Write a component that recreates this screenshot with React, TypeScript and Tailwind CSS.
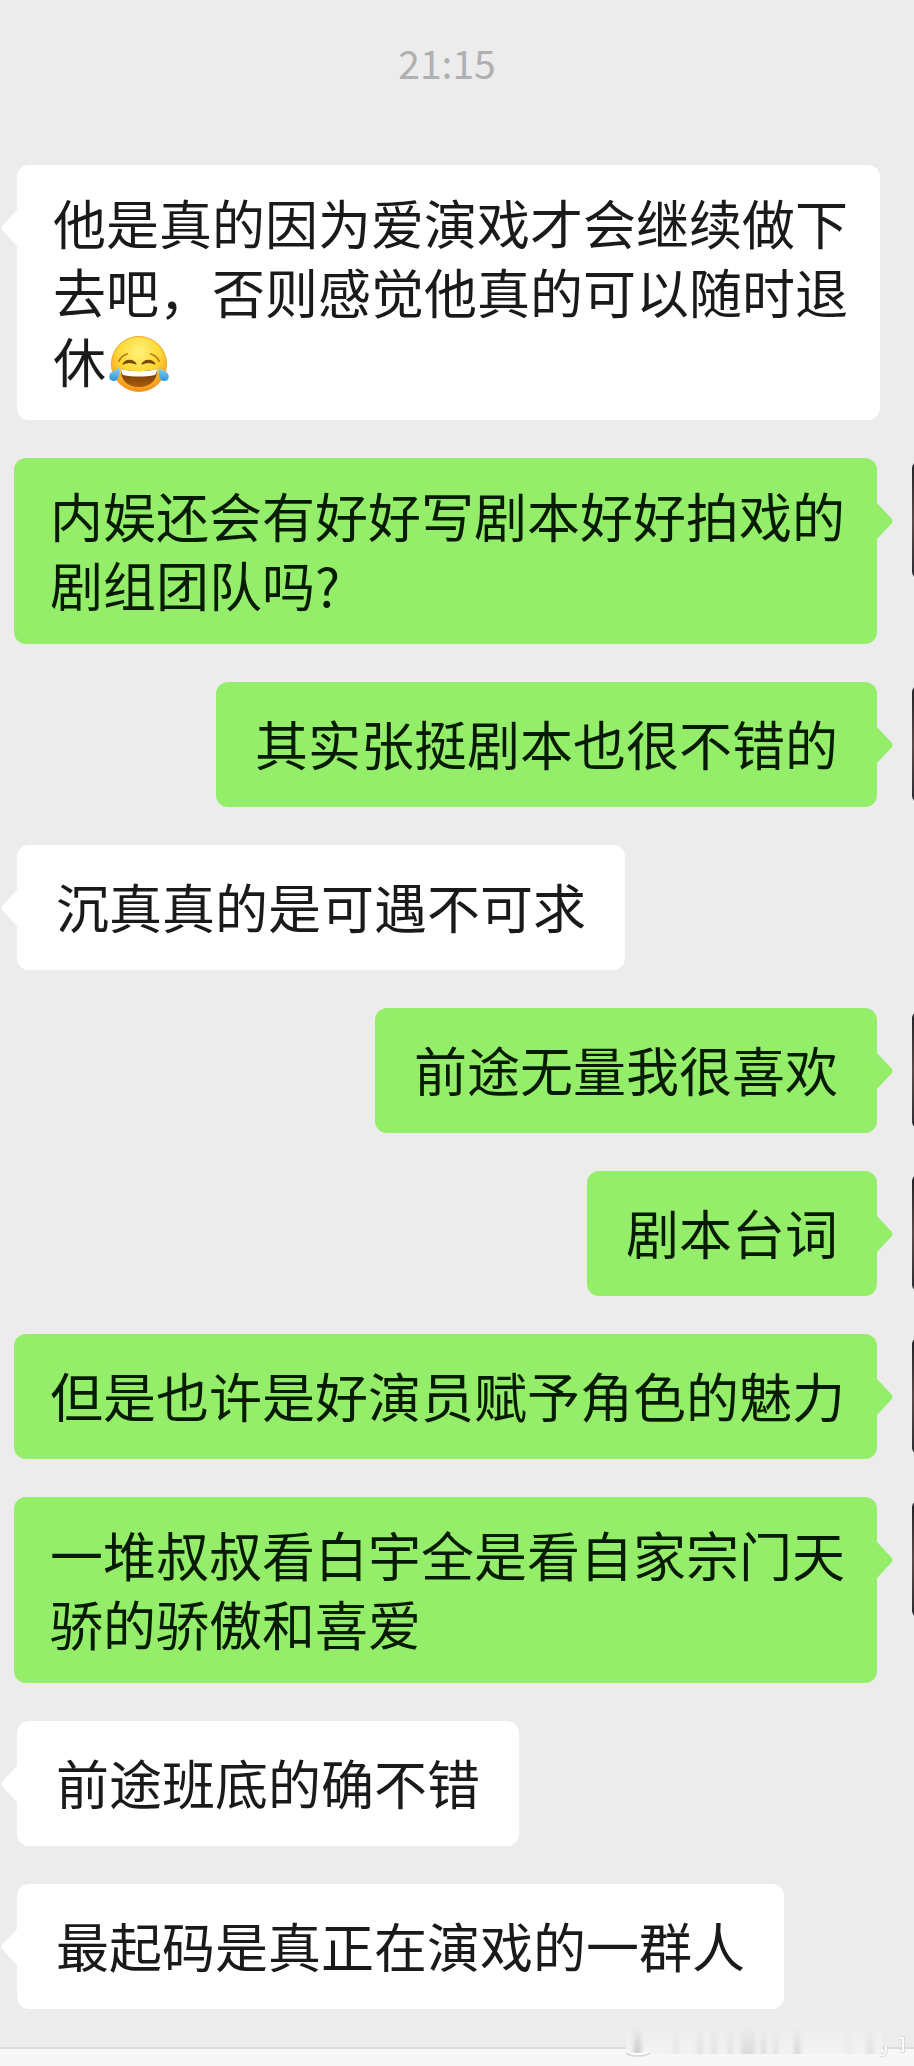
type Message = {
  text: string;
  sent?: boolean;
  wide?: boolean;
  emoji?: boolean;
};

const messages: Message[] = [
  {
    text: "他是真的因为爱演戏才会继续做下去吧，否则感觉他真的可以随时退休",
    wide: true,
    emoji: true,
  },
  { text: "内娱还会有好好写剧本好好拍戏的剧组团队吗?", sent: true, wide: true },
  { text: "其实张挺剧本也很不错的", sent: true },
  { text: "沉真真的是可遇不可求" },
  { text: "前途无量我很喜欢", sent: true },
  { text: "剧本台词", sent: true },
  { text: "但是也许是好演员赋予角色的魅力", sent: true, wide: true },
  {
    text: "一堆叔叔看白宇全是看自家宗门天骄的骄傲和喜爱",
    sent: true,
    wide: true,
  },
  { text: "前途班底的确不错" },
  { text: "最起码是真正在演戏的一群人" },
];

const JoyEmoji = () => (
  <svg
    className="inline-block w-[60px] h-[60px] ml-[3px] -mt-3 -mb-1 align-middle"
    viewBox="0 0 60 60"
    role="img"
    aria-label="笑哭"
  >
    <defs>
      <radialGradient id="face" cx="50%" cy="28%" r="75%">
        <stop offset="0" stopColor="#fff27a" />
        <stop offset="0.5" stopColor="#fdd835" />
        <stop offset="0.82" stopColor="#f9a825" />
        <stop offset="1" stopColor="#ef8412" />
      </radialGradient>
      <linearGradient id="tear" x1="0" y1="0" x2="0" y2="1">
        <stop offset="0" stopColor="#8fd8fb" />
        <stop offset="1" stopColor="#2a93dc" />
      </linearGradient>
      <linearGradient id="mouth" x1="0" y1="0" x2="0" y2="1">
        <stop offset="0" stopColor="#6b3606" />
        <stop offset="1" stopColor="#a85a0c" />
      </linearGradient>
    </defs>
    <circle cx="30" cy="29" r="27.5" fill="url(#face)" stroke="#eda32a" />
    <path
      d="M10 26c2-4 5-6 8-7M50 26c-2-4-5-6-8-7"
      fill="none"
      stroke="#b87814"
      strokeWidth="1.8"
      strokeLinecap="round"
    />
    <path
      d="M14 29c3-5 10-5 13 0-4-2-9-2-13 0ZM33 29c3-5 10-5 13 0-4-2-9-2-13 0Z"
      fill="#7a4708"
      stroke="#7a4708"
      strokeWidth="1.2"
      strokeLinejoin="round"
    />
    <path
      d="M12 34c12 3 24 3 36 0 1 11-7 18-18 18S11 45 12 34Z"
      fill="url(#mouth)"
    />
    <path
      d="M12 34c12 3 24 3 36 0 0 3-1 5-2 6-10 2-22 2-32 0-1-1-2-3-2-6Z"
      fill="#fff"
    />
    <path
      d="M10 32c1 6 0 14-5 14-6 0-6-7-2-9 3-2 5-2 7-5ZM50 32c-1 6 0 14 5 14 6 0 6-7 2-9-3-2-5-2-7-5Z"
      fill="url(#tear)"
    />
  </svg>
);

const Tail = ({ sent }: { sent?: boolean }) => (
  <svg
    className={
      sent
        ? "absolute top-[45px] left-full w-4 h-9 text-[#95ee6a]"
        : "absolute top-[45px] right-full w-4 h-9 text-white -scale-x-100"
    }
    viewBox="0 0 16 36"
    fill="currentColor"
    aria-hidden="true"
  >
    <path d="M0 0L14.5 15.5Q16.5 18 14.5 20.5L0 36Z" />
  </svg>
);

const Bubble = ({ text, sent, wide, emoji }: Message) => {
  const multiline = wide && text.length > 15;
  return (
    <div
      className={`relative max-w-[863px] rounded-xl ${
        sent ? "bg-[#95ee6a] text-[#061c02]" : "bg-white text-[#1a1a1a]"
      } ${wide ? "pl-9 pr-8" : "px-[39px]"} ${
        multiline ? "pt-[23px] pb-[25px]" : "pt-[27px] pb-[29px]"
      }`}
    >
      <Tail sent={sent} />
      <p className="text-[53px] leading-[69px]">
        {text}
        {emoji && <JoyEmoji />}
      </p>
    </div>
  );
};

const Avatar = () => (
  <div className="shrink-0 w-[116px] h-[116px] mt-1 ml-[35px] -mr-[114px] rounded-md bg-linear-to-b from-[#222226] via-[#5b4d4c] to-[#2c2c30]"></div>
);

// x, width and strength of each faded vertical streak
const streaks = [
  [12, 7, 1],
  [52, 4, 0.4],
  [75, 6, 0.4],
  [89, 6, 0.4],
  [106, 5, 0.45],
  [119, 14, 0.55],
  [139, 5, 0.55],
  [151, 5, 0.4],
  [172, 6, 0.6],
  [225, 4, 0.25],
  [245, 6, 0.45],
];

const Watermark = () => (
  <svg
    className="absolute right-0 bottom-0 w-[292px] h-[46px]"
    viewBox="0 0 292 46"
    aria-hidden="true"
  >
    <defs>
      <linearGradient id="haze" x1="0" y1="0" x2="0" y2="1">
        <stop offset="0" stopColor="#ececec" />
        <stop offset="1" stopColor="#f3f3f3" />
      </linearGradient>
      <linearGradient id="streak" x1="0" y1="0" x2="0" y2="1">
        <stop offset="0" stopColor="#c4c4c4" stopOpacity="0" />
        <stop offset="1" stopColor="#c4c4c4" />
      </linearGradient>
      <filter id="soft" x="-5%" y="-5%" width="110%" height="110%">
        <feGaussianBlur stdDeviation="2 0.3" />
      </filter>
    </defs>
    <rect x="4" y="2" width="256" height="32" fill="url(#haze)" />
    <g filter="url(#soft)">
      {streaks.map(([x, width, strength]) => (
        <rect
          key={x}
          x={x}
          y="6"
          width={width}
          height="28"
          fill="url(#streak)"
          opacity={strength}
        />
      ))}
    </g>
    <path d="M5 32c3 4 18 4 22 0" fill="none" stroke="#dadada" strokeWidth="4" />
    <path d="M5 31c3 4 18 4 22 0" fill="none" stroke="#fff" strokeWidth="2" />
    <path
      d="M264 26v4c0 4-2 6-6 5M277 18h4v13h-4"
      fill="none"
      stroke="#dadada"
      strokeWidth="4"
    />
    <path
      d="M264 26v4c0 4-2 6-6 5M277 18h4v13h-4"
      fill="none"
      stroke="#fafafa"
      strokeWidth="2"
    />
  </svg>
);

export default function App() {
  return (
    <div className="relative w-full min-h-screen flex flex-col overflow-hidden bg-[#ececec] font-['Noto_Sans_CJK_SC',sans-serif]">
      <div className="h-[165px] pr-5 pt-[33px] text-center text-[39px] leading-[58px] text-[#b0b0b0]">
        21:15
      </div>
      <div className="flex flex-col gap-[38px]">
        {messages.map((message) => (
          <div
            key={message.text}
            className={
              message.sent ? "flex justify-end items-start" : "flex pl-[17px]"
            }
          >
            <Bubble {...message} />
            {message.sent && <Avatar />}
          </div>
        ))}
      </div>
      <div className="grow mt-[38px] border-t-2 border-[#dcdcdc] bg-[#f7f7f7]"></div>
      <Watermark />
    </div>
  );
}
